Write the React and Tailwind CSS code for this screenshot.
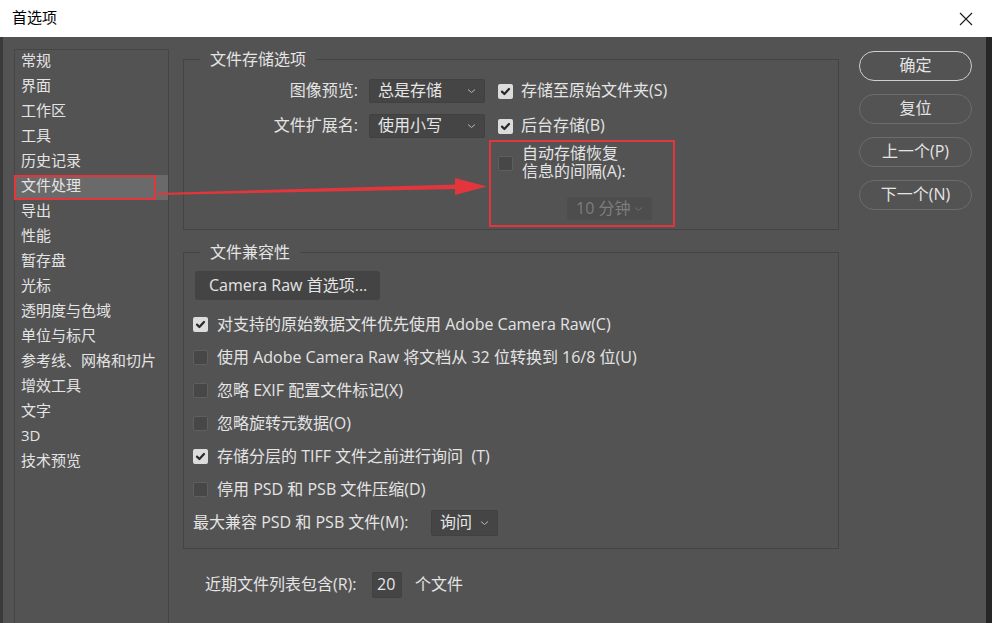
import React from "react";

const FONT = { fontFamily: '"Open Sans", "Noto Sans CJK SC", sans-serif' };

function Check({ checked }) {
  if (checked) {
    return (
      <span className="flex h-[15px] w-[15px] shrink-0 items-center justify-center rounded-[2px] bg-[#dcdcdc]">
        <svg width="11" height="11" viewBox="0 0 11 11">
          <path d="M2 5.6 L4.4 8 L9 3" fill="none" stroke="#2a2a2a" strokeWidth="2.2" strokeLinecap="round" strokeLinejoin="round" />
        </svg>
      </span>
    );
  }
  return <span className="block h-[15px] w-[15px] shrink-0 rounded-[2px] border border-[#5f5f5f] bg-[#474747]" />;
}

function Chevron({ color = "#b8b8b8" }) {
  return (
    <svg width="9" height="6" viewBox="0 0 9 6" className="shrink-0">
      <path d="M1 1.5 L4.5 4.5 L8 1.5" fill="none" stroke={color} strokeWidth="1" />
    </svg>
  );
}

function Select({ text, w, h = 24, disabled }) {
  return (
    <div
      className={`flex items-center justify-between rounded-[2px] border pl-[8px] pr-[8px] ${
        disabled ? "border-[#4e4e4e] bg-[#4d4d4d] text-[#7d7d7d]" : "border-[#414141] bg-[#454545] text-[#e6e6e6]"
      }`}
      style={{ width: w, height: h }}
    >
      <span className="-translate-y-[1px] text-[16px] leading-none">{text}</span>
      <Chevron color={disabled ? "#6e6e6e" : "#b8b8b8"} />
    </div>
  );
}

const listItems = [
  "常规",
  "界面",
  "工作区",
  "工具",
  "历史记录",
  "文件处理",
  "导出",
  "性能",
  "暂存盘",
  "光标",
  "透明度与色域",
  "单位与标尺",
  "参考线、网格和切片",
  "增效工具",
  "文字",
  "3D",
  "技术预览",
];

const compatRows = [
  [true, "对支持的原始数据文件优先使用 Adobe Camera Raw(C)"],
  [false, "使用 Adobe Camera Raw 将文档从 32 位转换到 16/8 位(U)"],
  [false, "忽略 EXIF 配置文件标记(X)"],
  [false, "忽略旋转元数据(O)"],
  [true, "存储分层的 TIFF 文件之前进行询问  (T)"],
  [false, "停用 PSD 和 PSB 文件压缩(D)"],
];

export default function App() {
  return (
    <div className="relative h-[623px] w-[992px] overflow-hidden bg-[#535353] text-[#e4e4e4]" style={FONT}>
      {/* Title bar */}
      <div className="flex h-[37px] items-center justify-between bg-white pl-[12px] pr-[19px] text-black">
        <span className="-translate-y-[1px] text-[15px] leading-none">首选项</span>
        <svg width="14" height="14" viewBox="0 0 14 14">
          <path d="M1 1 L13 13 M13 1 L1 13" stroke="#1a1a1a" strokeWidth="1.1" />
        </svg>
      </div>

      {/* Body */}
      <div className="flex h-[586px] border-l-[3px] border-r-[6px] border-l-[#3a3a3a] border-r-[#262626]">
        {/* Left list */}
        <div className="ml-[11px] mt-[12px] h-[600px] w-[155px] shrink-0 border border-[#454545]">
          {listItems.map((t) => {
            const sel = t === "文件处理";
            return (
              <div
                key={t}
                className={`relative flex h-[25px] items-center pl-[6px] text-[15px] leading-none ${sel ? "bg-[#6a6a6a]" : ""}`}
              >
                <span className="-translate-y-[2px]">{t}</span>
                {sel && <div className="absolute -left-[1px] top-0 h-[25px] w-[142px] border-2 border-[#e2363c]" />}
              </div>
            );
          })}
        </div>

        {/* Center content */}
        <div className="ml-[14px] mt-[11px] w-[656px] shrink-0 text-[16px]">
          <fieldset className="h-[182px] border border-[#444444]">
            <legend className="ml-[16px] px-[10px] text-[16px] leading-[22px]">文件存储选项</legend>
            <div className="mt-[9px] flex h-[24px] items-center">
              <span className="w-[174px] -translate-y-[1px] text-right leading-none">图像预览:</span>
              <div className="ml-[11px]">
                <Select text="总是存储" w={116} />
              </div>
              <div className="ml-[13px] flex items-center">
                <Check checked />
                <span className="ml-[8px] -translate-y-[1px] leading-none">存储至原始文件夹(S)</span>
              </div>
            </div>
            <div className="mt-[11px] flex h-[24px] items-center">
              <span className="w-[174px] -translate-y-[1px] text-right leading-none">文件扩展名:</span>
              <div className="ml-[11px]">
                <Select text="使用小写" w={116} />
              </div>
              <div className="ml-[13px] flex items-center">
                <Check checked />
                <span className="ml-[8px] -translate-y-[1px] leading-none">后台存储(B)</span>
              </div>
            </div>
            <div className="ml-[305px] mt-[2px] h-[87px] w-[186px] border-2 border-[#e2363c]">
              <div className="flex pl-[7px] pt-[2px]">
                <div className="mt-[12px]">
                  <Check />
                </div>
                <div className="ml-[9px] leading-[18px]">
                  自动存储恢复
                  <br />
                  信息的间隔(A):
                </div>
              </div>
              <div className="ml-[76px] mt-[17px]">
                <Select text="10 分钟" w={85} h={23} disabled />
              </div>
            </div>
          </fieldset>

          <fieldset className="mt-[11px] h-[308px] border border-[#444444]">
            <legend className="ml-[16px] px-[10px] text-[16px] leading-[22px]">文件兼容性</legend>
            <div className="ml-[11px] mt-[8px] flex h-[29px] w-[185px] items-center rounded-[3px] bg-[#444444] pl-[14px] leading-none">
              <span className="-translate-y-[1px]">Camera Raw 首选项...</span>
            </div>
            <div className="mt-[8px]">
              {compatRows.map(([c, t]) => (
                <div key={t} className="ml-[9px] flex h-[33px] items-center">
                  <Check checked={c} />
                  <span className="ml-[9px] -translate-y-[1px] whitespace-pre leading-none">{t}</span>
                </div>
              ))}
              <div className="ml-[9px] flex h-[34px] items-center">
                <span className="w-[238px] -translate-y-[1px] leading-none">最大兼容 PSD 和 PSB 文件(M):</span>
                <Select text="询问" w={67} h={26} />
              </div>
            </div>
          </fieldset>

          <div className="ml-[22px] mt-[23px] flex h-[26px] items-center">
            <span className="w-[156px] -translate-y-[1px] leading-none">近期文件列表包含(R):</span>
            <div className="ml-[11px] flex h-[26px] w-[30px] items-center rounded-[2px] border border-[#414141] bg-[#454545] pl-[4px] leading-none">
              <span className="-translate-y-[1px]">20</span>
            </div>
            <span className="ml-[13px] -translate-y-[1px] leading-none">个文件</span>
          </div>
        </div>

        {/* Buttons */}
        <div className="ml-[20px] mt-[14px] flex w-[113px] shrink-0 flex-col gap-[13px] text-[16px]">
          <div className="flex h-[30px] items-center justify-center rounded-full border-[1.5px] border-[#cfcfcf] leading-none">
            <span className="-translate-y-[1px]">确定</span>
          </div>
          <div className="flex h-[30px] items-center justify-center rounded-full border border-[#6c6c6c] leading-none">
            <span className="-translate-y-[1px]">复位</span>
          </div>
          <div className="flex h-[30px] items-center justify-center rounded-full border border-[#6c6c6c] leading-none">
            <span className="-translate-y-[1px]">上一个(P)</span>
          </div>
          <div className="flex h-[30px] items-center justify-center rounded-full border border-[#6c6c6c] leading-none">
            <span className="-translate-y-[1px]">下一个(N)</span>
          </div>
        </div>
      </div>

      {/* Red annotation arrow */}
      <svg className="pointer-events-none absolute left-0 top-0" width="992" height="623" viewBox="0 0 992 623">
        <polygon points="158,193 458,184.5 458,189 158,195" fill="#e2363c" />
        <polygon points="455,178 487,186.5 455,195" fill="#e2363c" />
      </svg>
    </div>
  );
}
